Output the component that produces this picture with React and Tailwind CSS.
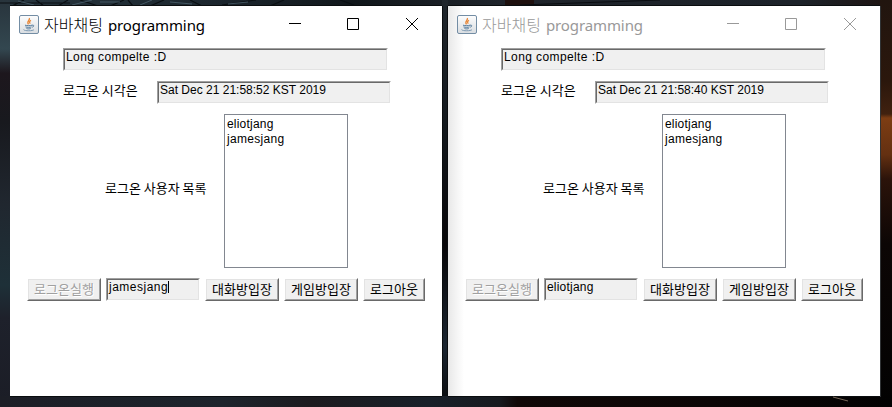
const body = "font-['Noto_Sans_CJK_KR',sans-serif] font-normal";
const latin = "font-['Liberation_Sans','Noto_Sans_CJK_KR',sans-serif]";

// Dark photograph of a wire fence and wooden beams, visible around the windows.
function Wallpaper() {
  return (
    <svg className="absolute inset-0" width="892" height="407" preserveAspectRatio="none">
      <defs>
        <linearGradient id="top" x1="0" x2="1" y1="0" y2="0">
          <stop offset="0" stopColor="#27363f" />
          <stop offset="0.24" stopColor="#1c262e" />
          <stop offset="0.4" stopColor="#11171b" />
          <stop offset="0.56" stopColor="#1f242b" />
          <stop offset="0.9" stopColor="#1c2229" />
          <stop offset="1" stopColor="#1e1310" />
        </linearGradient>
        <linearGradient id="left" x1="0" x2="0" y1="0" y2="1">
          <stop offset="0" stopColor="#28343c" />
          <stop offset="0.12" stopColor="#334750" />
          <stop offset="0.18" stopColor="#1d171d" />
          <stop offset="0.3" stopColor="#18191e" />
          <stop offset="0.5" stopColor="#20272f" />
          <stop offset="0.7" stopColor="#1e3038" />
          <stop offset="0.78" stopColor="#1e212b" />
          <stop offset="1" stopColor="#1b1d26" />
        </linearGradient>
        <linearGradient id="middle" x1="0" x2="0" y1="0" y2="1">
          <stop offset="0" stopColor="#20262c" />
          <stop offset="0.3" stopColor="#14191e" />
          <stop offset="0.6" stopColor="#080709" />
          <stop offset="0.85" stopColor="#1b2530" />
          <stop offset="1" stopColor="#090a0c" />
        </linearGradient>
        <linearGradient id="right" x1="0" x2="0" y1="0" y2="1">
          <stop offset="0" stopColor="#21150f" />
          <stop offset="0.2" stopColor="#2b170c" />
          <stop offset="0.28" stopColor="#40210f" />
          <stop offset="0.29" stopColor="#7d3d13" />
          <stop offset="0.38" stopColor="#643011" />
          <stop offset="0.44" stopColor="#2b130a" />
          <stop offset="0.6" stopColor="#0c0605" />
          <stop offset="1" stopColor="#020202" />
        </linearGradient>
        <linearGradient id="bottom" x1="0" x2="1" y1="0" y2="0">
          <stop offset="0" stopColor="#1c1e26" />
          <stop offset="0.25" stopColor="#1d242c" />
          <stop offset="0.35" stopColor="#1c1b1f" />
          <stop offset="0.48" stopColor="#182029" />
          <stop offset="0.56" stopColor="#171a1f" />
          <stop offset="0.58" stopColor="#100807" />
          <stop offset="0.8" stopColor="#0b0606" />
          <stop offset="1" stopColor="#020202" />
        </linearGradient>
      </defs>
      <rect width="892" height="407" fill="#101317" />
      <rect width="892" height="6" fill="url(#top)" />
      <rect width="10" height="407" fill="url(#left)" />
      <rect x="442" width="6" height="407" fill="url(#middle)" />
      <rect x="880" width="12" height="407" fill="url(#right)" />
      <rect y="396" width="892" height="11" fill="url(#bottom)" />
      <path d="M0 3h70M12 6l12-6M36 0l8 6M58 6l10-6M80 0l18 6M110 6l14-6M128 0l5 6M150 6l14-6M190 0l12 6M222 5l34-5M270 6l14-6M340 0l14 5" stroke="#0a0f13" strokeWidth="1.2" />
      <path d="M18 1l16 4M72 5l20-5M100 2h20M140 5l12-5M170 2l22 2M228 4l20-2" stroke="#4c626e" strokeWidth="0.8" />
      <path d="M505 0h29v6h-29z" fill="#1e100e" />
      <path d="M520 5l140-5" stroke="#0a0d11" strokeWidth="1" />
      <path d="M10 5.500h432M448 5.500h432M442.500 6v390M447.500 6v390M10 396.500h432M448 396.500h432" stroke="#0a0d0f" />
      <path d="M880.500 6v391" stroke="#303335" />
      <path d="M833 397l15 4" stroke="#77685a" />
    </svg>
  );
}

function JavaIcon() {
  return (
    <svg width="20" height="19" viewBox="0 0 20 19" className="shrink-0">
      <defs>
        <linearGradient id="plate" x1="0" y1="0" x2="0" y2="1">
          <stop offset="0" stopColor="#fdfdfd" />
          <stop offset="1" stopColor="#d9dde1" />
        </linearGradient>
      </defs>
      <rect x="0.5" y="0.5" width="19" height="18" rx="1.5" fill="url(#plate)" stroke="#738da4" />
      <path d="M10.300 3c1.300 2-3.300 3-.8 6.300M12 5.300c-2 1-1.800 2-.7 3.300" fill="none" stroke="#e8883a" strokeWidth="1.300" />
      <path d="M6 10.200c2 .6 5.500.6 7 0M6.500 11.900c2 .6 4.500.6 6 0M7.500 13.500c1.500.5 3 .5 4.200 0M13 10.200c2.300-.6 2.300 1.500.2 2" fill="none" stroke="#557b9c" strokeWidth="1" />
      <path d="M4.500 14.600c1 1.600 9.500 1.500 10.500 0" fill="none" stroke="#7f9bb3" strokeWidth="1" />
    </svg>
  );
}

function Field({ className, children }) {
  return (
    <div className={`h-[23px] border border-t-[#a0a0a0] border-l-[#a0a0a0] border-r-white border-b-white ${className}`}>
      <div className={`${latin} h-[21px] overflow-hidden whitespace-pre border border-t-[#696969] border-l-[#696969] border-r-[#e3e3e3] border-b-[#e3e3e3] bg-[#f0f0f0] text-[12px] leading-[14px] text-black`}>
        {children}
      </div>
    </div>
  );
}

function Button({ className, disabled, children }) {
  return (
    <div className={`${body} h-[23px] whitespace-nowrap border border-t-white border-l-white border-r-[#696969] border-b-[#696969] ${className}`}>
      <div className={`h-[21px] border border-t-[#e3e3e3] border-l-[#e3e3e3] border-r-[#a0a0a0] border-b-[#a0a0a0] bg-[#f0f0f0] text-center text-[13px] leading-[17px] ${disabled ? "text-[#a0a0a0] [text-shadow:1px_1px_white]" : "text-black"}`}>
        {children}
      </div>
    </div>
  );
}

function ChatWindow({ active, time, user }) {
  return (
    <section className={`h-[390px] w-[432px] shrink-0 ${active ? "bg-white" : "bg-[linear-gradient(to_right,#e8e8e8,#fff_16px)]"}`}>
      <header className={`flex h-[36px] items-center pl-[9px] pr-[24px] ${active ? "text-black" : "text-[#999]"}`}>
        <JavaIcon />
        <h1 className="ml-[5px] flex-1 whitespace-nowrap font-['Open_Sans','Noto_Sans_CJK_KR',sans-serif] text-[15.500px] font-light leading-[20px]">
          <span className="font-['Noto_Sans_CJK_KR',sans-serif] text-[16px] font-light">자바채팅</span>
          <span className="ml-[5px] font-['Noto_Sans',sans-serif] text-[15px] font-normal tracking-[-0.1px]">programming</span>
        </h1>
        <svg width="129" height="12" viewBox="0 0 129 12" fill="none" stroke="currentColor">
          <path d="M0 5.500h12M58.500.5h11v11h-11zM117 0l12 12M129 0l-12 12" />
        </svg>
      </header>
      <div className="pl-[53px] pt-[6px]">
        <Field className="w-[325px]"><span className="pl-px tracking-[0.4px]">Long compelte :D</span></Field>
      </div>
      <div className="mt-[10px] flex pl-[53px]">
        <div className={`${body} w-[94px] whitespace-nowrap text-[13px] leading-[17px]`}>로그온 시각은</div>
        <Field className="w-[234px]"><span className="pl-px">{time}</span></Field>
      </div>
      <div className="mt-[10px] flex items-center pl-[95px]">
        <div className={`${body} w-[119px] whitespace-nowrap pb-[6px] text-[13px] leading-[18px]`}>로그온 사용자 목록</div>
        <ul className={`${latin} h-[154px] w-[124px] border border-[#828790] pl-[2px] pt-[2px] text-[12px] leading-[15px] tracking-[0.200px] text-black`}>
          <li>eliotjang</li>
          <li className="tracking-[0.300px]">jamesjang</li>
        </ul>
      </div>
      <div className="mt-[10px] flex pl-[17px]">
        <Button className="w-[74px]" disabled>로그온실행</Button>
        <Field className="ml-[5px] w-[94px]">
          <span className="flex pl-px">
            <span className={active ? "tracking-[0.5px]" : "tracking-[0.200px]"}>{user}</span>
            {active && <span className="mt-px h-[12px] w-px bg-black" />}
          </span>
        </Field>
        <Button className="ml-[5px] w-[74px]">대화방입장</Button>
        <Button className="ml-[5px] w-[74px]">게임방입장</Button>
        <Button className="ml-[5px] w-[62px]">로그아웃</Button>
      </div>
    </section>
  );
}

export default function App() {
  return (
    <main className="relative h-[407px] w-[892px] overflow-hidden">
      <Wallpaper />
      <div className="relative flex gap-[6px] pl-[10px] pt-[6px]">
        <ChatWindow active time="Sat Dec 21 21:58:52 KST 2019" user="jamesjang" />
        <ChatWindow time="Sat Dec 21 21:58:40 KST 2019" user="eliotjang" />
      </div>
    </main>
  );
}
